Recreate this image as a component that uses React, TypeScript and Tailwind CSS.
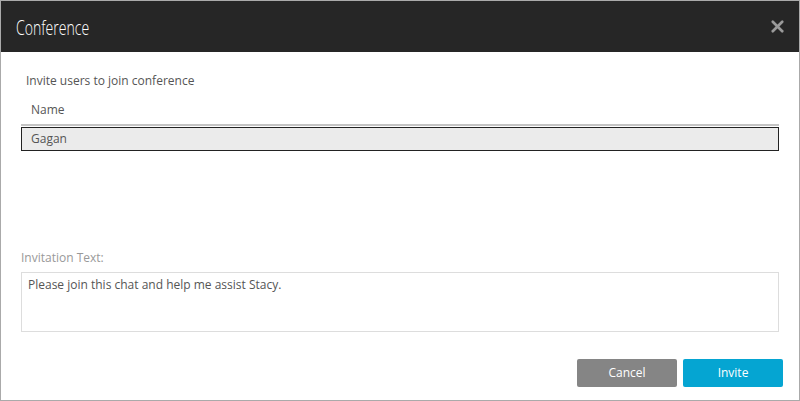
import { X } from "lucide-react";

export default function App() {
  return (
    <div className="w-[800px] h-[401px] border border-[#aaaaaa] bg-white flex flex-col font-['Open_Sans',sans-serif] text-[12px] leading-[18px]">
      {/* Header */}
      <div className="h-[51px] shrink-0 bg-[#262626] flex items-center justify-between pl-[15px] pr-[12px]">
        <h1 className="inline-block origin-left scale-x-[0.67] text-white text-[21px] font-light leading-[28px]">
          Conference
        </h1>
        <X className="w-[19px] h-[19px] text-[#9a9a9a]" strokeWidth={3.4} />
      </div>

      {/* Body */}
      <div className="flex-1 flex flex-col px-[20px]">
        <p className="pt-[20px] pl-[5px] text-[#555]">Invite users to join conference</p>
        <p className="mt-[11px] pl-[10px] text-[#555]">Name</p>

        <div className="mt-[5px] border-t-2 border-[#c4c4c4] pt-px">
          <div className="h-[24px] border border-[#222] bg-[#ebebeb] pl-[9px] flex items-center text-[#555]">
            Gagan
          </div>
        </div>

        <p className="mt-[98px] text-[#999]">Invitation Text:</p>
        <div className="mt-[5px] h-[60px] border border-[#dddddd] px-[6px] pt-[3px] text-[#555]">
          Please join this chat and help me assist Stacy.
        </div>

        <div className="mt-[27px] flex justify-end gap-[6px] -mr-[4px]">
          <button className="w-[100px] h-[28px] rounded-[2px] bg-[#858585] text-white text-[12px]">
            Cancel
          </button>
          <button className="w-[100px] h-[28px] rounded-[2px] bg-[#05a5d2] text-white text-[12px]">
            Invite
          </button>
        </div>
      </div>
    </div>
  );
}
